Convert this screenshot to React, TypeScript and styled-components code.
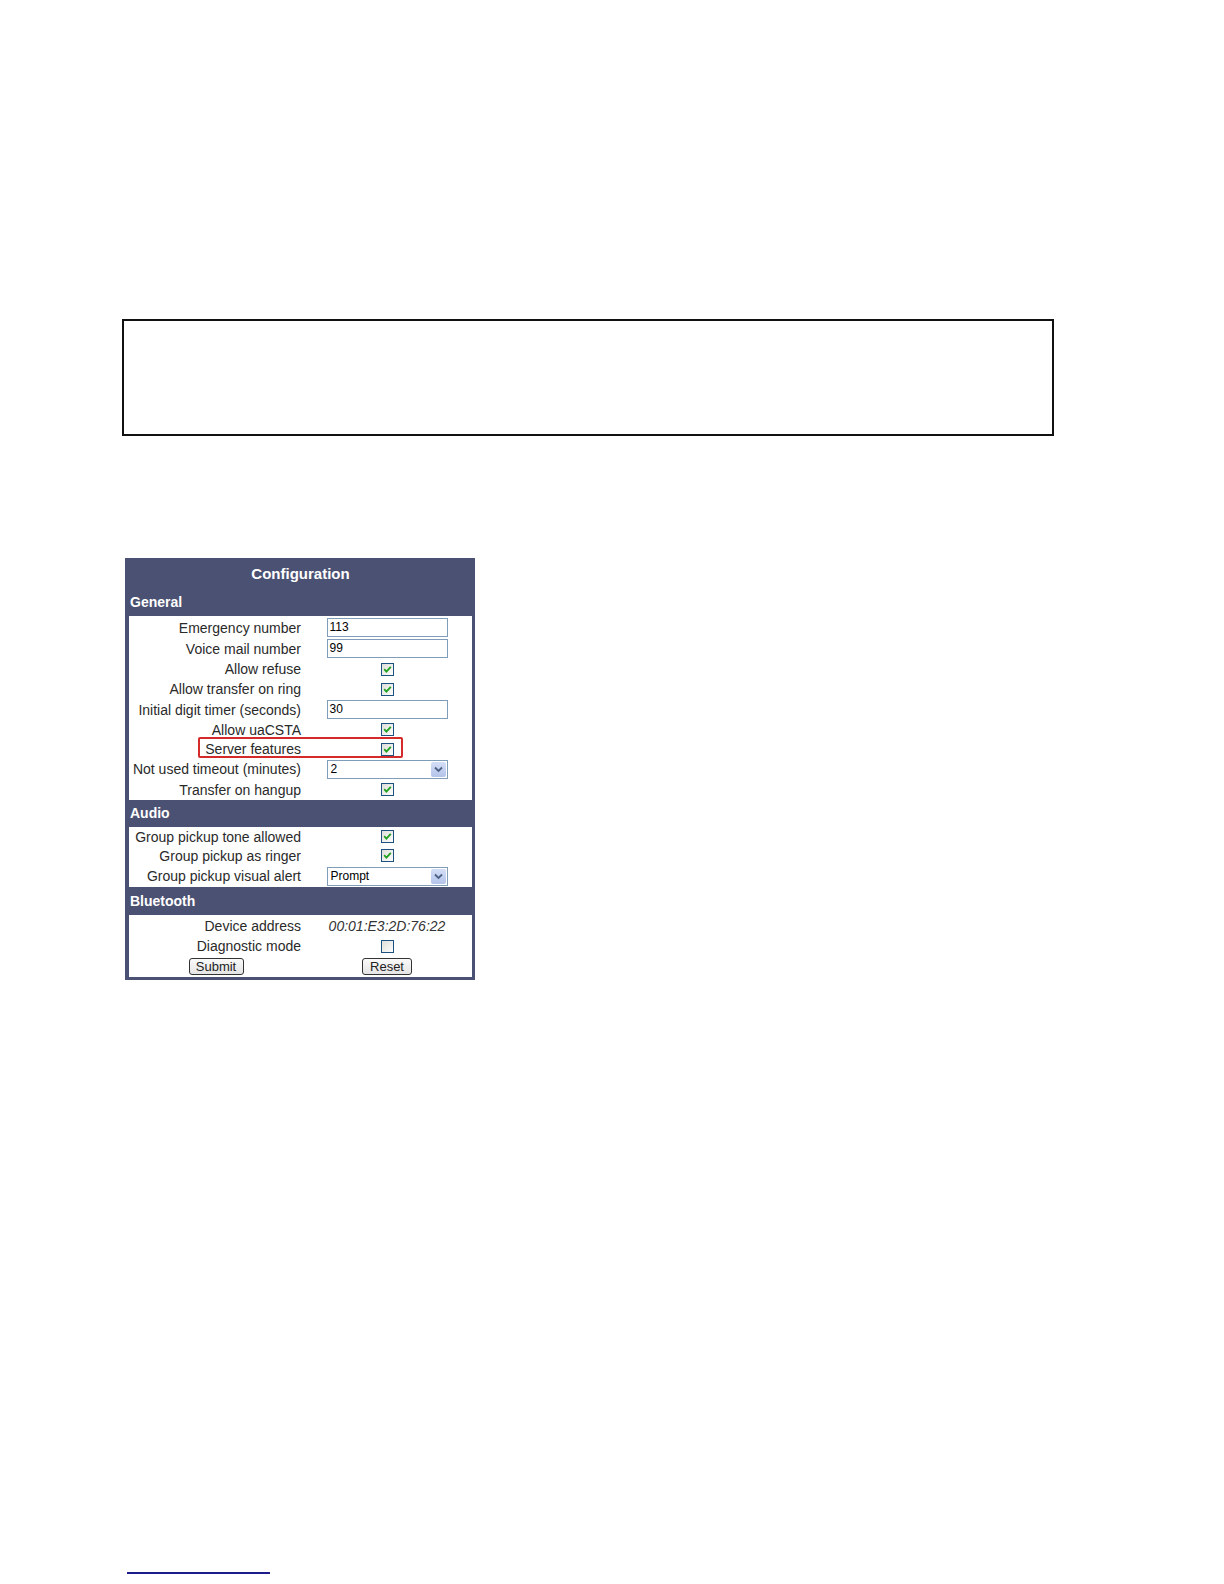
import React from 'react';
import styled, { createGlobalStyle } from 'styled-components';

const GlobalStyle = createGlobalStyle`
  html, body {
    margin: 0;
    padding: 0;
    background: #ffffff;
  }
  body {
    font-family: "Liberation Sans", Arial, sans-serif;
  }
`;

const Page = styled.div`
  width: 1224px;
  height: 1584px;
  box-sizing: border-box;
  padding: 319px 0 0 122px;
  display: flex;
  flex-direction: column;
  align-items: flex-start;
`;

/* empty framed note box */
const NoteBox = styled.div`
  width: 932px;
  height: 117px;
  box-sizing: border-box;
  border: 2px solid #111;
`;

const Panel = styled.div`
  margin: 122px 0 0 3px;
  width: 350px;
  box-sizing: border-box;
  background: #4b5172;
  padding: 0 3px 3px 4px;
  color: #222;
`;

const Title = styled.div`
  height: 31px;
  line-height: 31px;
  text-align: center;
  color: #fff;
  font-weight: bold;
  font-size: 15px;
`;

const SectionHead = styled.div<{ $h?: number }>`
  height: ${({ $h }) => $h ?? 27}px;
  line-height: ${({ $h }) => $h ?? 27}px;
  padding-left: 1px;
  color: #fff;
  font-weight: bold;
  font-size: 14px;
`;

const Section = styled.div<{ $pt?: number }>`
  background: #fff;
  padding-top: ${({ $pt }) => $pt ?? 0}px;
`;

const Row = styled.div<{ $h: number }>`
  position: relative;
  display: grid;
  grid-template-columns: 177px 162px;
  height: ${({ $h }) => $h}px;
  align-items: center;
`;

const Label = styled.div`
  text-align: right;
  padding-right: 5px;
  font-size: 14px;
  white-space: nowrap;
  color: #2a2a2a;
`;

const Value = styled.div<{ $pr?: number }>`
  display: flex;
  justify-content: center;
  align-items: center;
  padding-right: ${({ $pr }) => $pr ?? 0}px;
`;

const TextInput = styled.div`
  width: 121px;
  height: 19px;
  box-sizing: border-box;
  border: 1px solid #7f9db9;
  background: #fff;
  font-size: 12px;
  line-height: 17px;
  padding-left: 2px;
  color: #000;
`;

const Select = styled.div`
  width: 121px;
  height: 19px;
  box-sizing: border-box;
  border: 1px solid #7f9db9;
  background: #fff;
  display: flex;
  align-items: stretch;
  font-size: 12px;
  color: #000;
`;

const SelectText = styled.span`
  flex: 1;
  padding-left: 3px;
  line-height: 17px;
`;

const SelectButton = styled.span`
  width: 15px;
  margin: 1px;
  border-radius: 2px;
  background: linear-gradient(#d4def6, #b3c3ea);
  display: flex;
  align-items: center;
  justify-content: center;
`;

const Italic = styled.span`
  font-style: italic;
  font-size: 14px;
  color: #333;
`;

const Highlight = styled.div`
  position: absolute;
  left: 69px;
  top: -2px;
  width: 205px;
  height: 21px;
  box-sizing: border-box;
  border: 2px solid #d42a2a;
  border-radius: 2px;
  pointer-events: none;
`;

const Button = styled.div<{ $w: number }>`
  width: ${({ $w }) => $w}px;
  height: 17px;
  box-sizing: border-box;
  border: 1px solid #333;
  border-radius: 3px;
  background: linear-gradient(#fafafa, #e4e4e4);
  font-size: 13px;
  line-height: 15px;
  text-align: center;
  color: #222;
`;

const FootLine = styled.div`
  margin: auto 0 10px 5px;
  width: 143px;
  height: 2px;
  background: #1c1c8c;
`;

const Check = ({ on = true }: { on?: boolean }) => (
  <svg width="13" height="13" viewBox="0 0 13 13">
    <defs>
      <linearGradient id="cbg" x1="0" y1="0" x2="1" y2="1">
        <stop offset="0" stopColor="#dcdcd7" />
        <stop offset="1" stopColor="#ffffff" />
      </linearGradient>
    </defs>
    <rect x="0.5" y="0.5" width="12" height="12" fill="url(#cbg)" stroke="#1c5180" />
    {on && (
      <path d="M3.2 6.2 L5.4 8.6 L9.8 3.8" fill="none" stroke="#21a121" strokeWidth="1.8" />
    )}
  </svg>
);

const Chevron = () => (
  <svg width="9" height="7" viewBox="0 0 9 7">
    <path d="M1 1.5 L4.5 5 L8 1.5" fill="none" stroke="#4d6185" strokeWidth="1.8" />
  </svg>
);

type Field =
  | { kind: 'input'; label: string; value: string; h?: number }
  | { kind: 'check'; label: string; on?: boolean; mark?: boolean; h?: number }
  | { kind: 'select'; label: string; value: string; h?: number }
  | { kind: 'text'; label: string; value: string; h?: number };

const general: Field[] = [
  { kind: 'input', label: 'Emergency number', value: '113' },
  { kind: 'input', label: 'Voice mail number', value: '99' },
  { kind: 'check', label: 'Allow refuse' },
  { kind: 'check', label: 'Allow transfer on ring' },
  { kind: 'input', label: 'Initial digit timer (seconds)', value: '30' },
  { kind: 'check', label: 'Allow uaCSTA', h: 19 },
  { kind: 'check', label: 'Server features', mark: true },
  { kind: 'select', label: 'Not used timeout (minutes)', value: '2' },
  { kind: 'check', label: 'Transfer on hangup', h: 21 },
];

const audio: Field[] = [
  { kind: 'check', label: 'Group pickup tone allowed', h: 19 },
  { kind: 'check', label: 'Group pickup as ringer', h: 19 },
  { kind: 'select', label: 'Group pickup visual alert', value: 'Prompt', h: 22 },
];

const bluetooth: Field[] = [
  { kind: 'text', label: 'Device address', value: '00:01:E3:2D:76:22' },
  { kind: 'check', label: 'Diagnostic mode', on: false },
];

const FieldRow = ({ f }: { f: Field }) => {
  const h = f.h ?? (f.kind === 'input' || f.kind === 'text' ? 21 : 20);
  return (
    <Row $h={h}>
      <Label>{f.label}</Label>
      <Value>
        {f.kind === 'input' && <TextInput>{f.value}</TextInput>}
        {f.kind === 'check' && <Check on={f.on !== false} />}
        {f.kind === 'select' && (
          <Select>
            <SelectText>{f.value}</SelectText>
            <SelectButton>
              <Chevron />
            </SelectButton>
          </Select>
        )}
        {f.kind === 'text' && <Italic>{f.value}</Italic>}
      </Value>
      {f.kind === 'check' && f.mark && <Highlight />}
    </Row>
  );
};

export default function App() {
  return (
    <>
      <GlobalStyle />
      <Page>
        <NoteBox />
        <Panel>
          <Title>Configuration</Title>
          <SectionHead>General</SectionHead>
          <Section $pt={1}>
            {general.map((f) => (
              <FieldRow key={f.label} f={f} />
            ))}
          </Section>
          <SectionHead>Audio</SectionHead>
          <Section>
            {audio.map((f) => (
              <FieldRow key={f.label} f={f} />
            ))}
          </Section>
          <SectionHead $h={28}>Bluetooth</SectionHead>
          <Section>
            {bluetooth.map((f) => (
              <FieldRow key={f.label} f={f} />
            ))}
            <Row $h={21}>
              <Value $pr={3}>
                <Button $w={55}>Submit</Button>
              </Value>
              <Value>
                <Button $w={50}>Reset</Button>
              </Value>
            </Row>
          </Section>
        </Panel>
        <FootLine />
      </Page>
    </>
  );
}
